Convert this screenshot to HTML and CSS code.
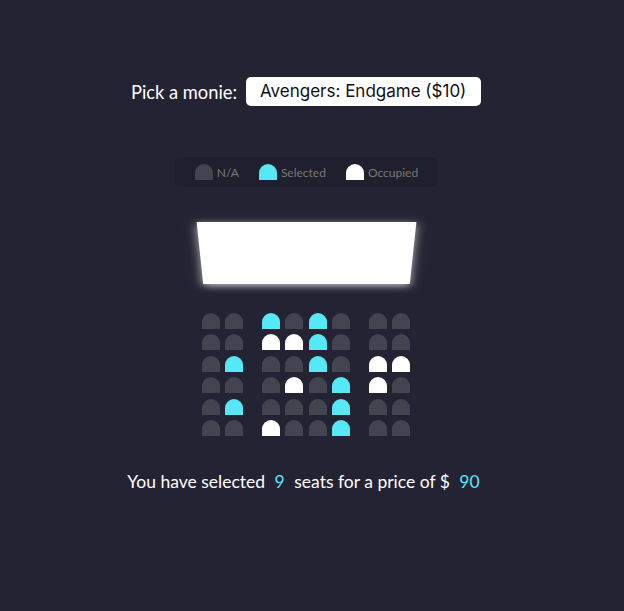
FILE: index.html
```html
<!DOCTYPE html>
<html lang="en">
<head>
<meta charset="UTF-8">
<title>Movie Seat Booking</title>
<link rel="stylesheet" href="styles.css">
</head>
<body>
<main class="page">
  <div class="movie-container">
    <label class="movie-label" for="movie">Pick a monie:</label>
    <select id="movie" class="movie-select">
      <option value="10">Avengers: Endgame ($10)</option>
      <option value="12">Joker ($12)</option>
      <option value="8">Toy Story 4 ($8)</option>
      <option value="9">The Lion King ($9)</option>
    </select>
  </div>

  <ul class="showcase">
    <li class="showcase-item"><div class="seat"></div><small>N/A</small></li>
    <li class="showcase-item"><div class="seat selected"></div><small>Selected</small></li>
    <li class="showcase-item"><div class="seat occupied"></div><small>Occupied</small></li>
  </ul>

  <div class="screen-wrap"><div class="screen"></div></div>

  <div class="seats">
    <div class="row">
      <div class="seat"></div><div class="seat"></div>
      <div class="seat selected"></div><div class="seat"></div><div class="seat selected"></div><div class="seat"></div>
      <div class="seat"></div><div class="seat"></div>
    </div>
    <div class="row">
      <div class="seat"></div><div class="seat"></div>
      <div class="seat occupied"></div><div class="seat occupied"></div><div class="seat selected"></div><div class="seat"></div>
      <div class="seat"></div><div class="seat"></div>
    </div>
    <div class="row">
      <div class="seat"></div><div class="seat selected"></div>
      <div class="seat"></div><div class="seat"></div><div class="seat selected"></div><div class="seat"></div>
      <div class="seat occupied"></div><div class="seat occupied"></div>
    </div>
    <div class="row">
      <div class="seat"></div><div class="seat"></div>
      <div class="seat"></div><div class="seat occupied"></div><div class="seat"></div><div class="seat selected"></div>
      <div class="seat occupied"></div><div class="seat"></div>
    </div>
    <div class="row">
      <div class="seat"></div><div class="seat selected"></div>
      <div class="seat"></div><div class="seat"></div><div class="seat"></div><div class="seat selected"></div>
      <div class="seat"></div><div class="seat"></div>
    </div>
    <div class="row">
      <div class="seat"></div><div class="seat"></div>
      <div class="seat occupied"></div><div class="seat"></div><div class="seat"></div><div class="seat selected"></div>
      <div class="seat"></div><div class="seat"></div>
    </div>
  </div>

  <p class="text">You have selected <span class="num">9</span> seats for a price of $ <span class="num">90</span></p>
</main>
</body>
</html>
```
FILE: styles.css
```css
* { box-sizing: border-box; }

html, body {
  margin: 0;
  padding: 0;
  background-color: #242333;
}

body {
  color: #fff;
  font-family: Lato, "Noto Sans", sans-serif;
  height: 611px;
  overflow: hidden;
}

.page {
  width: 612px;
  display: flex;
  flex-direction: column;
  align-items: center;
  padding-top: 77px;
}

.movie-container {
  display: flex;
  align-items: center;
  height: 29px;
}

.movie-label {
  font-size: 18.3px;
}

.movie-select {
  -webkit-appearance: none;
  appearance: none;
  background-color: #fff;
  color: #111;
  border: 0;
  border-radius: 5px;
  font-family: Inter, "Noto Sans", sans-serif;
  font-size: 17px;
  line-height: 21px;
  height: 29px;
  margin-left: 9px;
  padding: 4px 14px;
  outline: none;
}

.showcase {
  list-style: none;
  margin: 51px 0 0;
  padding: 0 9px 0 10px;
  height: 30px;
  display: flex;
  align-items: center;
  background: rgba(0, 0, 0, 0.1);
  border-radius: 5px;
  color: #777;
}

.showcase-item {
  display: flex;
  align-items: center;
  margin: 0 10px;
}

.showcase-item small {
  font-size: 12px;
  margin-left: 4px;
}

.showcase-item .seat { margin: 0; }

.screen-wrap {
  perspective: 1000px;
  margin-top: 23px;
}

.screen {
  width: 213px;
  height: 88px;
  background-color: #fff;
  transform: rotateX(-45deg);
  box-shadow: 0 3px 10px rgba(255, 255, 255, 0.7);
}

.seats {
  margin-top: 15px;
  display: flex;
  flex-direction: column;
  gap: 5.4px;
}

.row {
  display: flex;
  gap: 5.3px;
}

.seat {
  width: 18px;
  height: 16px;
  background-color: #444451;
  border-top-left-radius: 10px;
  border-top-right-radius: 10px;
}

.seat.selected { background-color: #56e8f5; }
.seat.occupied { background-color: #fff; }

.row .seat:nth-child(2) { margin-right: 13.7px; }
.row .seat:nth-last-child(2) { margin-left: 13.7px; }

.text {
  margin: 35px 0 0;
  font-size: 17.5px;
}

.num {
  color: #56e8f5;
  padding: 0 5px;
}
```
